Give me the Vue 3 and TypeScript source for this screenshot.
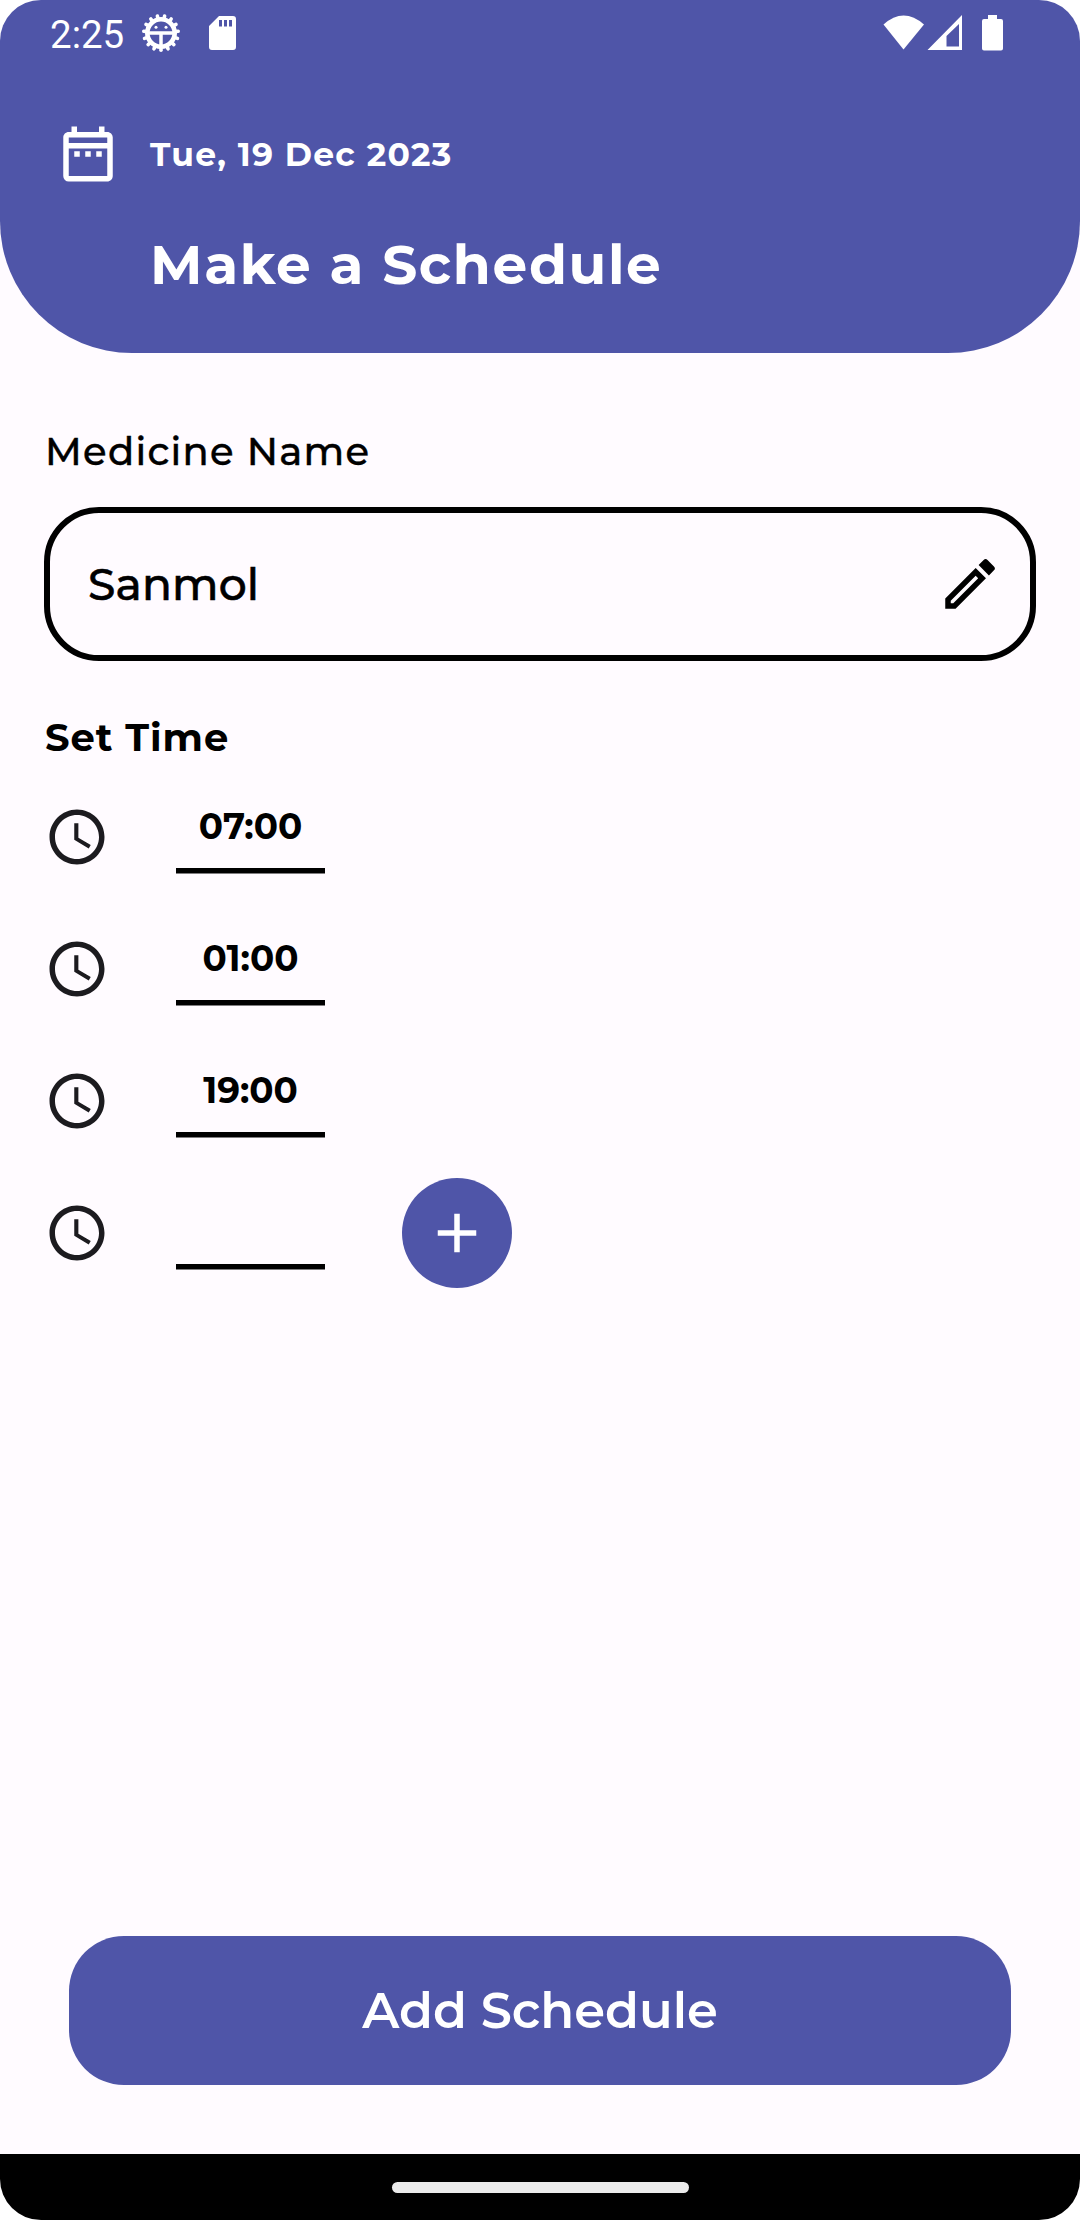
<script setup lang="ts">
import { ref } from 'vue'

const today = 'Tue, 19 Dec 2023'
const medicine = ref('Sanmol')
const times = ref<string[]>(['07:00', '01:00', '19:00', ''])
const teeth = Array.from({ length: 15 }, (_, i) => 180 + i * 24)

function addTime() {
  times.value.push('')
}
</script>

<template>
  <div class="screen">
    <header class="header">
      <div class="status">
        <span class="clock">2:25</span>
        <svg class="gear" width="40" height="40" viewBox="-20 -20 40 40">
          <circle r="13.700" fill="none" stroke="#fff" stroke-width="4.600" />
          <path
            v-for="a in teeth"
            :key="a"
            d="M0 -15V-17.300"
            stroke="#fff"
            stroke-width="3.600"
            stroke-linecap="round"
            :transform="`rotate(${a})`"
          />
          <path d="M-13 0H13M0 0V14" stroke="#fff" stroke-width="3.500" />
          <circle cx="-5" cy="-5.700" r="1.500" fill="#fff" />
          <circle cx="5" cy="-5.700" r="1.500" fill="#fff" />
        </svg>
        <svg class="sd" width="27" height="34" viewBox="0 0 27 34">
          <path
            fill="#fff"
            fill-rule="evenodd"
            d="M10 0H24Q27 0 27 3V31Q27 34 24 34H3Q0 34 0 31V10ZM10 4V10.500H13V4ZM15 4V10.500H18V4ZM20 4V10.500H23V4Z"
          />
        </svg>
        <span class="spacer"></span>
        <svg width="121" height="36" viewBox="0 0 121 36" fill="#fff">
          <path d="M0.500 9.500Q20.500 -8.500 41 9.500L20.500 34.500Z" />
          <path fill-rule="evenodd" d="M79 0V35H44.500ZM76 9L63.500 21V31.500H76Z" />
          <path d="M105 0H114V4H118Q120 4 120 6V33.500Q120 35.500 118 35.500H101Q99 35.500 99 33.500V6Q99 4 101 4H105Z" />
        </svg>
      </div>
      <div class="date-row">
        <svg width="66" height="66" viewBox="0 0 24 24" fill="#fff">
          <path
            d="M7 11h2v2H7zM11 11h2v2h-2zM15 11h2v2h-2zM19 4h-1V2h-2v2H8V2H6v2H5c-1.110 0-1.990.9-1.990 2L3 20a2 2 0 0 0 2 2h14c1.100 0 2-.9 2-2V6c0-1.100-.9-2-2-2zm0 16H5V10h14v10zm0-12H5V6h14v2z"
          />
        </svg>
        <span class="date">{{ today }}</span>
      </div>
      <h1 class="title">Make a Schedule</h1>
    </header>

    <main class="content">
      <label class="label">Medicine Name</label>
      <div class="input">
        <span class="value">{{ medicine }}</span>
        <svg width="66" height="66" viewBox="0 0 24 24">
          <path
            d="M3 17.250V21h3.750L17.810 9.940l-3.750-3.750L3 17.250zM5.920 19H5v-.92l9.060-9.060.92.92L5.920 19zM20.710 5.630l-2.340-2.340a1 1 0 0 0-1.410 0l-1.830 1.830 3.750 3.750 1.830-1.830a1 1 0 0 0 0-1.410z"
          />
        </svg>
      </div>
      <label class="label set-time">Set Time</label>
      <div v-for="(t, i) in times" :key="i" class="time-row">
        <svg width="66" height="66" viewBox="0 0 24 24" fill="#1c1b1f">
          <path
            d="M11.990 2C6.470 2 2 6.480 2 12s4.470 10 9.990 10C17.520 22 22 17.520 22 12S17.520 2 11.990 2zM12 20c-4.420 0-8-3.580-8-8s3.580-8 8-8 8 3.580 8 8-3.580 8-8 8zM12.500 7H11v6l5.250 3.150.75-1.230-4.500-2.670z"
          />
        </svg>
        <div class="time">{{ t }}</div>
        <button v-if="i === times.length - 1" class="plus" @click="addTime">
          <svg width="66" height="66" viewBox="0 0 24 24" fill="#fff">
            <path d="M19 13h-6v6h-2v-6H5v-2h6V5h2v6h6v2z" />
          </svg>
        </button>
      </div>
      <button class="submit">Add Schedule</button>
    </main>

    <footer class="nav"><span class="pill"></span></footer>
  </div>
</template>

<style>
body {
  background: #fff;
}
</style>

<style scoped>
.screen {
  width: 1080px;
  height: 2220px;
  display: flex;
  flex-direction: column;
  overflow: hidden;
  border-radius: 41px;
  background: #fffbff;
  color: #000;
  font-family: Montserrat, Inter, sans-serif;
}
svg {
  display: block;
  flex: none;
}
button {
  border: 0;
  padding: 0;
  background: #4f55a8;
  color: #fff;
  font-family: inherit;
}
.header {
  height: 353px;
  flex: none;
  display: flex;
  flex-direction: column;
  align-items: flex-start;
  border-radius: 0 0 132px 132px;
  background: #4f55a8;
  color: #fff;
}
.status {
  width: 100%;
  height: 66px;
  box-sizing: border-box;
  padding: 0 76px 0 50px;
  display: flex;
}
.clock {
  width: 91px;
  font: 400 38.5px/70px Roboto, sans-serif;
}
.gear {
  margin-top: 13px;
}
.sd {
  margin: 16px 0 0 28px;
}
.spacer {
  flex: 1;
}
.status > svg:last-child {
  margin-top: 15px;
}
.date-row {
  margin: 55px 0 0 55px;
  display: flex;
}
.date {
  margin-left: 29px;
  font-size: 33px;
  font-weight: 700;
  line-height: 66px;
  letter-spacing: 1.25px;
}
.title {
  margin: 45px 0 0 150px;
  font-size: 55px;
  font-weight: 700;
  line-height: 66px;
  letter-spacing: 1.6px;
}
.content {
  flex: 1;
  padding: 77px 44px 69px;
  display: flex;
  flex-direction: column;
  align-items: flex-start;
}
.label {
  margin-left: 1px;
  font-size: 38.5px;
  font-weight: 500;
  line-height: 44px;
  letter-spacing: 1.3px;
  -webkit-text-stroke: 0.4px #000;
}
.input {
  width: 992px;
  height: 154px;
  margin-top: 33px;
  box-sizing: border-box;
  border: 6px solid #000;
  border-radius: 55px;
  padding: 0 27px 0 38px;
  display: flex;
  align-items: center;
  justify-content: space-between;
}
.value {
  font-size: 44px;
  font-weight: 500;
  line-height: 60px;
  letter-spacing: 0.15px;
  -webkit-text-stroke: 0.6px #000;
}
.set-time {
  margin: 55px 0 22px 1px;
  font-weight: 700;
  letter-spacing: 0.94px;
  -webkit-text-stroke: 0;
}
.time-row {
  height: 110px;
  margin-bottom: 22px;
  display: flex;
  align-items: center;
}
.time {
  align-self: flex-start;
  width: 149px;
  height: 82px;
  margin: 9px 0 0 66px;
  box-sizing: border-box;
  border-bottom: 5px solid #000;
  box-shadow: 0 1px rgba(0, 0, 0, 0.5);
  text-align: center;
  font-size: 35.75px;
  font-weight: 700;
  line-height: 71px;
}
.plus {
  width: 110px;
  height: 110px;
  margin-left: 77px;
  border-radius: 50%;
  display: flex;
  align-items: center;
  justify-content: center;
}
.submit {
  width: 942px;
  height: 149px;
  margin: auto 0 0 25px;
  padding-bottom: 2px;
  border-radius: 55px;
  font-size: 49.5px;
  font-weight: 600;
}
.nav {
  height: 66px;
  flex: none;
  display: flex;
  align-items: center;
  justify-content: center;
  background: #000;
}
.pill {
  width: 297px;
  height: 11px;
  border-radius: 6px;
  background: #ebebeb;
}
</style>
